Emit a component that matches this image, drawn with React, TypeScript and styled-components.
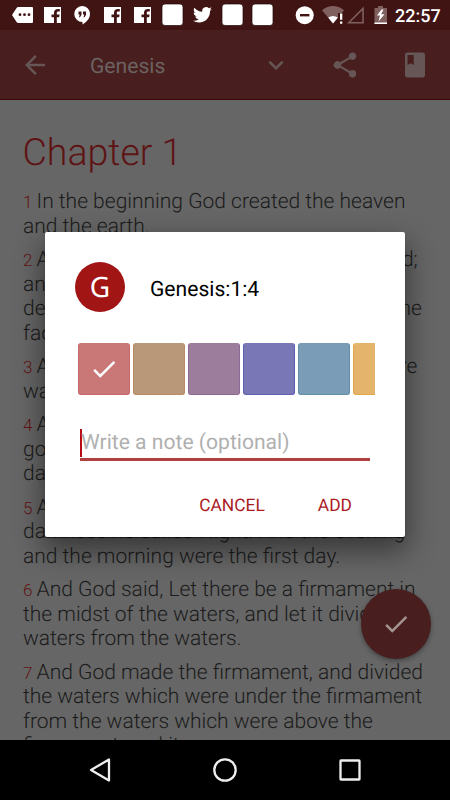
import React from 'react';
import styled, { createGlobalStyle } from 'styled-components';

const GlobalStyle = createGlobalStyle`
  * { box-sizing: border-box; }
  body { margin: 0; background: #000; font-family: Roboto, "Liberation Sans", sans-serif; text-rendering: geometricPrecision; }
  button { font: inherit; border: 0; padding: 0; background: none; color: inherit; text-rendering: inherit; }
`;

const Screen = styled.div`
  position: relative;
  display: flex;
  flex-direction: column;
  width: 450px;
  height: 800px;
  overflow: hidden;
`;

const StatusBar = styled.header`
  display: flex;
  flex: none;
  height: 30px;
  background: #411414;
  color: #fff;
`;

const StatusIcons = styled.svg`
  display: block;
  width: 390px;
  height: 30px;
  flex: none;
`;

const Clock = styled.span`
  margin-left: 5px;
  line-height: 33px;
  font-size: 18px;
  font-weight: 500;
`;

const Toolbar = styled.nav`
  display: flex;
  align-items: center;
  flex: none;
  height: 70px;
  padding: 0 20px;
  background: #481e1e;
  border-bottom: 1px solid #3d0404;
  color: #665656;
`;

const ToolbarTitle = styled.h1`
  flex: 1;
  margin: 0 0 0 40px;
  padding-top: 5px;
  font-size: 21.1px;
  line-height: 26px;
  font-weight: 400;
  color: #6b6262;
`;

const ToolButton = styled.button<{ $gap?: number }>`
  display: flex;
  width: 30px;
  height: 30px;
  margin-left: ${(p) => p.$gap ?? 0}px;
  svg { width: 30px; height: 30px; fill: currentColor; }
`;

const Reader = styled.main`
  flex: 1;
  min-height: 0;
  overflow: hidden;
  padding: 29px 0 0 23px;
  background: #666;
  color: #1b1b1b;
  font-weight: 300;
`;

const ChapterTitle = styled.h2`
  margin: 0 0 13px -0.5px;
  font-size: 37.5px;
  line-height: 48px;
  font-weight: 300;
  color: #5e1414;
`;

const Verse = styled.p`
  margin: 0 0 9px;
  font-size: 21px;
  line-height: 24.5px;
`;

const VerseNumber = styled.span`
  font-size: 17px;
  line-height: 1;
  color: #641414;
`;

const Line = styled.span`
  display: block;
  height: 24.5px;
  white-space: nowrap;
`;

const ActionButton = styled.button`
  position: absolute;
  left: 361px;
  top: 589px;
  display: grid;
  place-items: center;
  width: 70px;
  height: 70px;
  border-radius: 50%;
  background: #481e1e;
  color: #a59393;
  box-shadow: 0 2px 5px rgba(0, 0, 0, 0.35);
`;

const Dialog = styled.section`
  position: absolute;
  left: 45px;
  top: 232px;
  display: flex;
  flex-direction: column;
  width: 360px;
  height: 305px;
  padding: 30px;
  border-radius: 2px;
  background: #fff;
  box-shadow: 0 1px 1px rgba(0, 0, 0, 0.6), 0 12px 28px 2px rgba(0, 0, 0, 0.45);
`;

const DialogHeader = styled.div`
  display: flex;
  align-items: center;
  height: 50px;
`;

const Avatar = styled.div`
  display: grid;
  place-items: center;
  width: 50px;
  height: 50px;
  border-radius: 50%;
  background: #a11515;
  color: #fff;
  font: 400 28px/50px "Noto Sans", sans-serif;
`;

const Reference = styled.h3`
  margin: 6px 0 0 25px;
  font-size: 21.1px;
  line-height: 26px;
  font-weight: 400;
  color: #000;
`;

const Swatches = styled.div`
  display: flex;
  flex: none;
  gap: 3px;
  margin-top: 31px;
  padding-left: 3px;
  height: 52px;
  overflow: hidden;
`;

const Swatch = styled.button<{ $fill: string; $edge: string }>`
  display: grid;
  place-items: center;
  flex: none;
  width: 52px;
  height: 52px;
  border: 1px solid ${(p) => p.$edge};
  border-top-color: ${(p) => p.$fill};
  border-radius: 3px;
  background: ${(p) => p.$fill};
  color: #fff;
`;

const NoteField = styled.div`
  display: flex;
  align-items: center;
  flex: none;
  margin: 32px 5px 0;
  height: 34px;
  border-bottom: 3px solid #b14040;
  font-size: 21.1px;
  line-height: 29px;
  color: #b0b0b0;
  white-space: nowrap;
`;

const Caret = styled.span`
  width: 2px;
  height: 28px;
  margin-right: -1px;
  background: #b80c14;
`;

const Actions = styled.div`
  display: flex;
  justify-content: flex-end;
  gap: 53px;
  margin-top: 32px;
  padding-right: 23px;
  color: #ab1b1f;
  font-size: 17.4px;
  line-height: 26px;
`;

const NavigationBar = styled.footer`
  display: flex;
  justify-content: space-between;
  align-items: center;
  flex: none;
  height: 60px;
  padding: 0 85px;
  background: #000;
  svg { width: 30px; height: 30px; fill: none; stroke: #eee; stroke-width: 2.3; stroke-linejoin: round; }
`;

const Check = () => (
  <svg width="30" height="30" viewBox="0 0 24 24" fill="currentColor">
    <path d="M9 16.17 4.83 12l-1.42 1.41L9 19 21 7l-1.41-1.41z" />
  </svg>
);

const FacebookMark = ({ x }: { x: number }) => (
  <g transform={`translate(${x} 7)`}>
    <path fill="#fff" d="M0 0h17v16h-4.2v-5.8h2.4l.4-2.7h-2.8V5.9c0-1 .4-1.5 1.5-1.5h1.5V2c-4-.5-5.8.7-5.8 3.8v1.7H7.5v2.7H10V16H0z" />
  </g>
);

const verses: string[][] = [
  ['In the beginning God created the heaven', 'and the earth.'],
  ['And the earth was without form, and void;', 'and darkness was upon the face of the', 'deep. And the Spirit of God moved upon the', 'face of the waters.'],
  ['And God said, Let there be light: and there', 'was light.'],
  ['And God saw the light, that it was', 'good: and God divided the light from the', 'darkness.'],
  ['And God called the light Day, and the', 'darkness he called Night. And the evening', 'and the morning were the first day.'],
  ['And God said, Let there be a firmament in', 'the midst of the waters, and let it divide the', 'waters from the waters.'],
  ['And God made the firmament, and divided', 'the waters which were under the firmament', 'from the waters which were above the', 'firmament: and it was so.'],
];

const swatches = [
  { fill: '#c97777', edge: '#c86969' },
  { fill: '#b99779', edge: '#b88b65' },
  { fill: '#9c7d9c', edge: '#8f6994' },
  { fill: '#7a77b7', edge: '#605eae' },
  { fill: '#7a9cb7', edge: '#628fa9' },
  { fill: '#e4b46d', edge: '#e1a847' },
];

export default function App() {
  return (
    <Screen>
      <GlobalStyle />
      <StatusBar>
        <StatusIcons viewBox="0 0 390 30" fill="#fff">
          <path d="m12 15 4.6-7q.6-1 1.8-1H32q1 0 1 1v14q0 1-1 1H18.400q-1.200 0-1.800-1z" />
          <g fill="#411414"><circle cx="20" cy="14.700" r="1.400" /><circle cx="24.500" cy="14.700" r="1.400" /><circle cx="29" cy="14.700" r="1.400" /></g>
          <FacebookMark x={44} />
          <path d="M82 6a8 8 0 0 1 8 8c0 4.500-3.500 8-7.500 10.400V22A8 8 0 1 1 82 6z" />
          <path fill="#411414" d="M78.500 11.500h3v3.200l-1.500 2.600h-1l.7-2.800h-1.200zM83 11.500h3v3.200l-1.500 2.600h-1l.7-2.800H83z" />
          <FacebookMark x={104} />
          <FacebookMark x={134} />
          <g stroke="#210606" strokeWidth=".7"><rect x="162" y="4" width="21" height="21.500" rx="3" /><rect x="222" y="4" width="21" height="21.500" rx="3" /><rect x="252" y="4" width="21" height="21.500" rx="3" /></g>
          <path transform="translate(193 5.300) scale(.79)" d="M23.950 4.570a10 10 0 0 1-2.820.77 4.960 4.960 0 0 0 2.160-2.720c-.950.560-2 .960-3.130 1.180A4.920 4.920 0 0 0 11.780 8.300C7.690 8.100 4.070 6.130 1.640 3.160A4.820 4.820 0 0 0 .970 5.640c0 1.710.870 3.210 2.190 4.100A4.900 4.900 0 0 1 .930 9.120v.06a4.920 4.920 0 0 0 3.950 4.830 5 5 0 0 1-2.210.080 4.940 4.940 0 0 0 4.600 3.420A9.870 9.870 0 0 1 0 19.540a14 14 0 0 0 7.550 2.210c9.050 0 14-7.500 14-13.980l-.02-.64a9.900 9.900 0 0 0 2.420-2.560z" />
          <circle cx="304.700" cy="15.200" r="9" /><path fill="#411414" d="M300 14h9.400v2.400H300z" />
          <path fill="#805f5f" d="M322 10.200Q333 1.800 344 10.200L341.800 13H338v5l-5 5.500z" />
          <path d="M328.200 17.500q4.800-3.200 9.600 0L333 23.500zM340 13.500h2.300v6.200H340zM340 21.500h2.300v2.300H340z" />
          <path fill="none" stroke="#805f5f" strokeWidth="1.600" d="M348.700 22.700 363 8.400v14.300z" />
          <path fill="#805f5f" d="M374.500 8h3.500V6h5v2h4v16h-12.500z" />
          <path d="M374.500 22.500H387V24h-12.500zM381.500 9.500l-4.500 6h3l-1.500 6 6-7.200h-3.300l2.300-4.800z" />
        </StatusIcons>
        <Clock>22:57</Clock>
      </StatusBar>
      <Toolbar>
        <ToolButton aria-label="Back"><svg viewBox="0 0 24 24"><path d="M20 11H7.830l5.590-5.590L12 4l-8 8 8 8 1.410-1.410L7.830 13H20z" /></svg></ToolButton>
        <ToolbarTitle>Genesis</ToolbarTitle>
        <ToolButton aria-label="Choose book"><svg viewBox="0 0 24 24"><path d="M16.590 8.590 12 13.170 7.410 8.590 6 10l6 6 6-6z" /></svg></ToolButton>
        <ToolButton $gap={39} aria-label="Share"><svg viewBox="0 0 24 24"><path d="M18 16.080c-.76 0-1.440.3-1.960.77L8.910 12.700c.05-.23.090-.46.090-.7s-.04-.47-.09-.7l7.050-4.110A3 3 0 1 0 15 5c0 .24.040.47.090.7L8.040 9.810A3 3 0 1 0 8.040 14.190l7.120 4.160c-.05.21-.08.43-.08.65A2.920 2.920 0 1 0 18 16.080z" /></svg></ToolButton>
        <ToolButton $gap={40} aria-label="Bookmarks"><svg viewBox="0 0 24 24"><path d="M18 2H6a2 2 0 0 0-2 2v16a2 2 0 0 0 2 2h12a2 2 0 0 0 2-2V4a2 2 0 0 0-2-2zM6 4h5v8l-2.500-1.500L6 12z" /></svg></ToolButton>
      </Toolbar>
      <Reader>
        <ChapterTitle>Chapter 1</ChapterTitle>
        {verses.map((lines, i) => (
          <Verse key={i}>
            {lines.map((line, j) => (
              <Line key={j}>{j === 0 && <VerseNumber>{i + 1} </VerseNumber>}{line}</Line>
            ))}
          </Verse>
        ))}
      </Reader>
      <ActionButton aria-label="Done"><Check /></ActionButton>
      <NavigationBar>
        <svg viewBox="0 0 30 30"><path d="M6 15 24 4.500v21z" /></svg>
        <svg viewBox="0 0 30 30"><circle cx="15" cy="15" r="10.700" /></svg>
        <svg viewBox="0 0 30 30"><rect x="5.500" y="5.500" width="19" height="19" rx=".5" /></svg>
      </NavigationBar>
      <Dialog role="dialog">
        <DialogHeader>
          <Avatar>G</Avatar>
          <Reference>Genesis:1:4</Reference>
        </DialogHeader>
        <Swatches>
          {swatches.map((s, i) => (
            <Swatch key={s.fill} $fill={s.fill} $edge={s.edge}>{i === 0 && <Check />}</Swatch>
          ))}
        </Swatches>
        <NoteField><Caret />Write a note (optional)</NoteField>
        <Actions><button>CANCEL</button><button>ADD</button></Actions>
      </Dialog>
    </Screen>
  );
}
